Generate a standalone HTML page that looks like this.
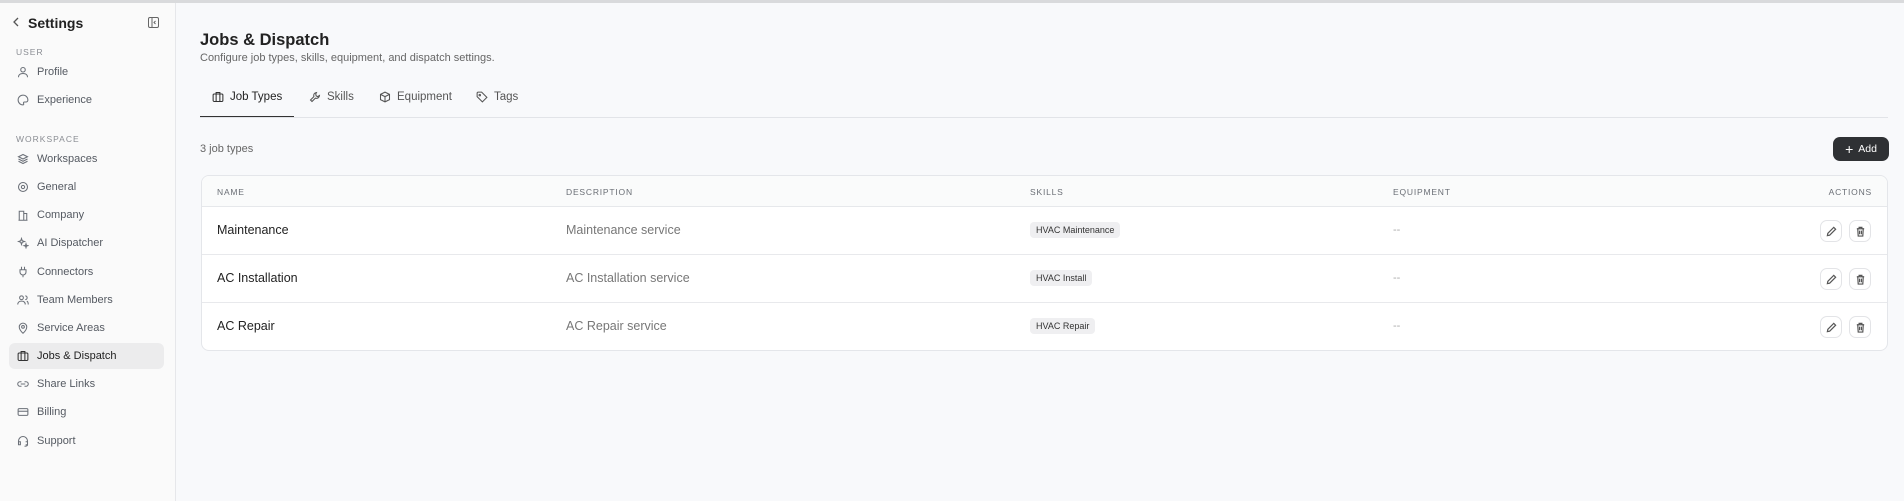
<!DOCTYPE html>
<html><head><meta charset="utf-8"><style>
*{box-sizing:border-box;margin:0;padding:0}
body{width:1904px;height:501px;overflow:hidden;font-family:"Liberation Sans",sans-serif;background:#f8f9fb;color:#222;position:relative}
.top{position:absolute;left:0;top:0;width:1904px;height:3px;background:#d9dadc}
.side{position:absolute;left:0;top:3px;width:176px;height:498px;background:#fafafa;border-right:1px solid #e6e7ea}
.abs{position:absolute}
.lbl{font-size:8.5px;letter-spacing:1px;color:#8a8d93}
.item{position:absolute;left:9px;width:155px;height:26px;border-radius:6px;font-size:11px;color:#555a62;display:flex;align-items:center;padding-left:8px}
.item svg{width:12px;height:12px;margin-right:8px;stroke:#6b7078;fill:none;stroke-width:1.4}
.item.on{background:#ececed;color:#222}
.item.on svg{stroke:#333}
.tab{position:absolute;top:91px;font-size:11.5px;color:#555;display:flex;align-items:center}
.tab svg{width:12px;height:12px;margin-right:6px;stroke:#555;fill:none;stroke-width:1.4}
.table{position:absolute;left:201px;top:175px;width:1687px;height:176px;background:#fff;border:1px solid #e4e6ea;border-radius:8px;overflow:hidden}
.hd{position:absolute;left:0;top:0;width:100%;height:31px;background:#fafbfb;border-bottom:1px solid #e6e8eb}
.th{position:absolute;top:11px;font-size:8.5px;letter-spacing:.8px;color:#6a6e75}
.row{position:absolute;left:0;width:100%;height:48px;border-bottom:1px solid #e8e9ec}
.nm{position:absolute;left:15px;top:16px;font-size:12.5px;color:#222}
.ds{position:absolute;left:364px;top:16px;font-size:12.5px;color:#777}
.bd{position:absolute;left:828px;top:15px;height:16px;padding:0 6px;background:#efeff1;border-radius:4px;font-size:9px;line-height:16px;color:#333}
.eq{position:absolute;left:1191px;top:17px;font-size:11px;color:#aaa}
.btn{position:absolute;top:13px;width:22px;height:22px;border:1px solid #e3e4e7;border-radius:7px;display:flex;align-items:center;justify-content:center}
.btn svg{width:11px;height:11px;fill:none;stroke:#555;stroke-width:1.3}
</style></head><body>
<div class="top"></div>
<div class="side">
<svg class="abs" style="left:12px;top:14px" width="8" height="10" viewBox="0 0 8 10"><path d="M6 1L2 5l4 4" stroke="#555" fill="none" stroke-width="1.3"/></svg>
<div class="abs" style="left:28px;top:12px;font-size:14px;font-weight:bold;color:#222">Settings</div>
<svg class="abs" style="left:148px;top:14px" width="11" height="11" viewBox="0 0 11 11"><rect x=".5" y=".5" width="10" height="10" rx="1.5" stroke="#666" fill="none"/><path d="M4 .5v10M7.5 4L6 5.5 7.5 7" stroke="#666" fill="none"/></svg>
<div class="abs lbl" style="left:16px;top:44px">USER</div>
<div class="abs lbl" style="left:16px;top:131px">WORKSPACE</div>
</div>
<div class="item" style="top:59px"><svg viewBox="0 0 16 16"><circle cx="8" cy="5" r="3"/><path d="M2 15c0-4 3-5 6-5s6 1 6 5"/></svg>Profile</div>
<div class="item" style="top:87px"><svg viewBox="0 0 16 16"><path d="M8 1.5a6.5 6.5 0 100 13c1 0 1.2-1 .8-1.8-.5-1 0-2 1.2-2H12a2.5 2.5 0 002.5-2.5C14.5 4 11.6 1.5 8 1.5z"/></svg>Experience</div>
<div class="item" style="top:146px"><svg viewBox="0 0 16 16"><path d="M8 2l6 3-6 3-6-3zM2 8l6 3 6-3M2 11l6 3 6-3"/></svg>Workspaces</div>
<div class="item" style="top:174px"><svg viewBox="0 0 16 16"><circle cx="8" cy="8" r="2.2"/><circle cx="8" cy="8" r="6"/></svg>General</div>
<div class="item" style="top:202px"><svg viewBox="0 0 16 16"><path d="M3 15V3h6v12M9 6h4v9M2 15h12"/></svg>Company</div>
<div class="item" style="top:230px"><svg viewBox="0 0 16 16"><path d="M6 2l1 3 3 1-3 1-1 3-1-3-3-1 3-1zM12 9l.6 2 2 .6-2 .6-.6 2-.6-2-2-.6 2-.6z"/></svg>AI Dispatcher</div>
<div class="item" style="top:259px"><svg viewBox="0 0 16 16"><path d="M6 1v4M10 1v4M4 5h8v3a4 4 0 01-8 0zM8 12v3"/></svg>Connectors</div>
<div class="item" style="top:287px"><svg viewBox="0 0 16 16"><circle cx="6" cy="5" r="2.5"/><path d="M1 14c0-3 2-4.5 5-4.5s5 1.5 5 4.5M11 2.5a2.5 2.5 0 010 5M13 9.5c1.5.5 2 2 2 4.5"/></svg>Team Members</div>
<div class="item" style="top:315px"><svg viewBox="0 0 16 16"><path d="M8 15s5-4.5 5-8.5a5 5 0 00-10 0C3 10.5 8 15 8 15z"/><circle cx="8" cy="6.5" r="1.8"/></svg>Service Areas</div>
<div class="item on" style="top:343px"><svg viewBox="0 0 16 16"><rect x="1.5" y="4" width="13" height="10" rx="1.5"/><path d="M5.5 4V2h5v2M5.5 4v10M10.5 4v10"/></svg>Jobs &amp; Dispatch</div>
<div class="item" style="top:371px"><svg viewBox="0 0 16 16"><path d="M6 5H4a3 3 0 000 6h2M10 5h2a3 3 0 010 6h-2M5 8h6"/></svg>Share Links</div>
<div class="item" style="top:399px"><svg viewBox="0 0 16 16"><rect x="1.5" y="3.5" width="13" height="9" rx="1.5"/><path d="M1.5 7h13"/></svg>Billing</div>
<div class="item" style="top:428px"><svg viewBox="0 0 16 16"><path d="M2 10V8a6 6 0 0112 0v2M2 9h2.5v4H2zM11.5 9H14v4h-2.5M14 13c0 1.5-2 2-4 2"/></svg>Support</div>

<div class="abs" style="left:200px;top:31px;font-size:16.5px;font-weight:bold;color:#222">Jobs &amp; Dispatch</div>
<div class="abs" style="left:200px;top:52px;font-size:11px;color:#666">Configure job types, skills, equipment, and dispatch settings.</div>
<div class="tab" style="left:212px;color:#222"><svg viewBox="0 0 16 16" style="stroke:#333"><rect x="1.5" y="4" width="13" height="10" rx="1.5"/><path d="M5.5 4V2h5v2M5.5 4v10M10.5 4v10"/></svg>Job Types</div>
<div class="tab" style="left:309px"><svg viewBox="0 0 16 16"><path d="M10 2a4 4 0 00-3.5 5.5L2 12l2 2 4.5-4.5A4 4 0 0014 6l-2.5 1.5-2-1L9 4z"/></svg>Skills</div>
<div class="tab" style="left:379px"><svg viewBox="0 0 16 16"><path d="M8 1.5l6 3v7l-6 3-6-3v-7zM2 4.5l6 3 6-3M8 7.5v7"/></svg>Equipment</div>
<div class="tab" style="left:476px"><svg viewBox="0 0 16 16"><path d="M1.5 2.5v5l7 7 6-6-7-7h-5z"/><circle cx="5" cy="5.5" r="1"/></svg>Tags</div>
<div class="abs" style="left:200px;top:116px;width:94px;height:2px;background:#333"></div>
<div class="abs" style="left:200px;top:117px;width:1688px;height:1px;background:#e2e4e8"></div>
<div class="abs" style="left:200px;top:143px;font-size:11px;color:#666">3 job types</div>
<div class="abs" style="left:1833px;top:137px;width:56px;height:24px;background:#2f3134;border-radius:7px;color:#fff;font-size:10.5px;display:flex;align-items:center;justify-content:center"><span style="font-size:14px;margin-right:5px;line-height:1">+</span>Add</div>

<div class="table">
<div class="hd"><div class="th" style="left:15px">NAME</div><div class="th" style="left:364px">DESCRIPTION</div><div class="th" style="left:828px">SKILLS</div><div class="th" style="left:1191px">EQUIPMENT</div><div class="th" style="right:15px">ACTIONS</div></div>
<div class="row" style="top:31px"><div class="nm">Maintenance</div><div class="ds">Maintenance service</div><div class="bd">HVAC Maintenance</div><div class="eq">--</div>
<div class="btn" style="right:45px"><svg viewBox="0 0 12 12"><path d="M8.5 1.5l2 2L4 10l-2.5.5L2 8z"/></svg></div><div class="btn" style="right:16px"><svg viewBox="0 0 12 12"><path d="M2 3h8M4.5 3V1.5h3V3M3 3l.5 8h5L9 3M5 5v4M7 5v4"/></svg></div></div>
<div class="row" style="top:79px"><div class="nm">AC Installation</div><div class="ds">AC Installation service</div><div class="bd">HVAC Install</div><div class="eq">--</div>
<div class="btn" style="right:45px"><svg viewBox="0 0 12 12"><path d="M8.5 1.5l2 2L4 10l-2.5.5L2 8z"/></svg></div><div class="btn" style="right:16px"><svg viewBox="0 0 12 12"><path d="M2 3h8M4.5 3V1.5h3V3M3 3l.5 8h5L9 3M5 5v4M7 5v4"/></svg></div></div>
<div class="row" style="top:127px;border-bottom:none"><div class="nm">AC Repair</div><div class="ds">AC Repair service</div><div class="bd">HVAC Repair</div><div class="eq">--</div>
<div class="btn" style="right:45px"><svg viewBox="0 0 12 12"><path d="M8.5 1.5l2 2L4 10l-2.5.5L2 8z"/></svg></div><div class="btn" style="right:16px"><svg viewBox="0 0 12 12"><path d="M2 3h8M4.5 3V1.5h3V3M3 3l.5 8h5L9 3M5 5v4M7 5v4"/></svg></div></div>
</div>
</body></html>
